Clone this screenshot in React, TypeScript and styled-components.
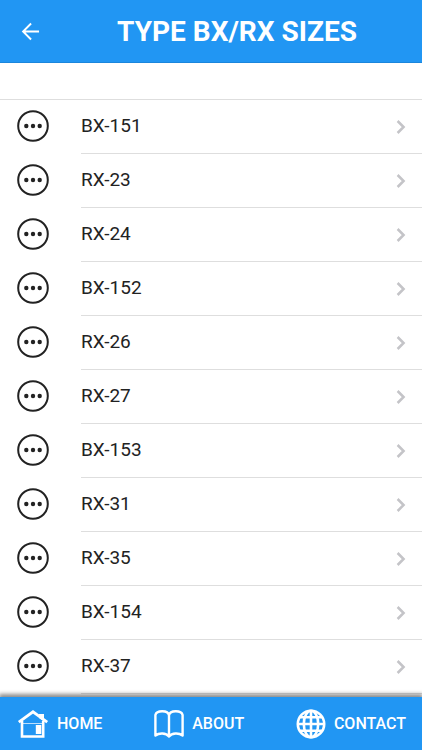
import React from 'react';
import styled, { createGlobalStyle } from 'styled-components';

const sizes = ['BX-151', 'RX-23', 'RX-24', 'BX-152', 'RX-26', 'RX-27', 'BX-153', 'RX-31', 'RX-35', 'BX-154', 'RX-37'];

const GlobalStyle = createGlobalStyle`
  *, *::before, *::after { box-sizing: border-box; }
  html, body, #root { height: 100%; }
  body { margin: 0; background: #fff; color: #222; font-family: Roboto, "Liberation Sans", sans-serif; }
`;

const Screen = styled.div`
  display: flex;
  flex-direction: column;
  height: 100%;
`;

const Header = styled.header`
  display: grid;
  grid-template-columns: 52px 1fr;
  align-items: center;
  flex: none;
  height: 63px;
  background: #2196f3;
  border-bottom: 1px solid #1b86dc;
  color: #fff;
`;

const BackButton = styled.button`
  display: flex;
  align-items: center;
  justify-content: flex-end;
  height: 48px;
  padding: 0 12px 0 0;
  border: 0;
  background: none;
  color: inherit;
  cursor: pointer;
`;

const Title = styled.h1`
  margin: 0;
  padding-top: 2px;
  text-align: center;
  font-size: 28px;
  line-height: 36px;
  font-weight: 700;
  white-space: nowrap;
`;

const Content = styled.main`
  flex: 1;
  min-height: 0;
  overflow: hidden;
`;

const List = styled.ul`
  margin: 36px 0 0;
  padding: 0;
  border-top: 1px solid #dedede;
  list-style: none;
`;

const Row = styled.a`
  display: flex;
  align-items: center;
  gap: 32px;
  height: 54px;
  padding-left: 17px;
  color: inherit;
  text-decoration: none;
`;

const Bullet = styled.svg`
  flex: none;
  margin-bottom: 2px;
`;

const RowBody = styled.span`
  display: flex;
  flex: 1;
  align-items: center;
  justify-content: space-between;
  height: 100%;
  padding-right: 16px;
  border-bottom: 1px solid #dedede;
`;

const RowLabel = styled.span`
  padding-bottom: 2px;
  font-size: 19px;
  line-height: 24px;
`;

const Footer = styled.nav`
  position: relative;
  display: flex;
  align-items: center;
  justify-content: space-between;
  flex: none;
  height: 53px;
  padding: 0 16px 0 17px;
  background: #2196f3;
  box-shadow: 0 -2px 4px 1px rgba(0, 0, 0, 0.45);
`;

const FooterLink = styled.a`
  display: flex;
  align-items: center;
  gap: 8px;
  color: #fff;
  font-size: 16px;
  line-height: 24px;
  font-weight: 500;
  text-decoration: none;
`;

const BackIcon = () => (
  <svg width="19" height="19" viewBox="0 0 20 20" fill="none" stroke="currentColor" strokeWidth="2" aria-hidden="true">
    <path d="M19 10H2.4M10.6 1.6 2.2 10l8.4 8.4" />
  </svg>
);

const MoreIcon = () => (
  <Bullet width="32" height="32" viewBox="0 0 32 32" aria-hidden="true">
    <circle cx="16" cy="16" r="14.8" fill="none" stroke="#222" strokeWidth="2" />
    <g fill="#222">
      <circle cx="9.3" cy="16" r="2.2" />
      <circle cx="16" cy="16" r="2.2" />
      <circle cx="22.7" cy="16" r="2.2" />
    </g>
  </Bullet>
);

const ChevronIcon = () => (
  <svg width="10" height="14" viewBox="0 0 10 14" fill="none" stroke="#c4c4c8" strokeWidth="2.5" aria-hidden="true">
    <path d="m1.6 1 6 6-6 6" />
  </svg>
);

const HomeIcon = () => (
  <svg width="32" height="28" viewBox="0 0 32 28" fill="none" stroke="currentColor" aria-hidden="true">
    <path d="M1.8 12.2 16 1.8l14.2 10.4" strokeWidth="2.8" />
    <path d="M5 11v15.5h21.2V11" strokeWidth="2.6" />
    <path d="M5 13.5h21.2" strokeWidth="0.7" />
    <path d="M22 4h5v7.5L22 8z" fill="currentColor" stroke="none" />
    <path d="M18.8 15h5.5v9h-5.5z" fill="currentColor" stroke="none" />
  </svg>
);

const BookIcon = () => (
  <svg width="30" height="28" viewBox="0 0 30 28" fill="none" stroke="currentColor" strokeWidth="2.4" strokeLinejoin="round" aria-hidden="true">
    <path d="M15 5.2C14 0 2.6 0 1.4 5v20.6c3.6-3 10.6-3 13.6.9 3-3.9 10-3.9 13.6-.9V5C27.4 0 16 0 15 5.2v21" />
  </svg>
);

const GlobeIcon = () => (
  <svg width="30" height="30" viewBox="0 0 30 30" fill="none" stroke="currentColor" strokeWidth="2.6" aria-hidden="true">
    <circle cx="15" cy="15" r="13.2" />
    <ellipse cx="15" cy="15" rx="7.2" ry="13.2" />
    <path d="M15 1.6v26.8M1.6 15h26.8M3.5 8.3h23M3.5 21.7h23" />
  </svg>
);

export default function App() {
  return (
    <Screen>
      <GlobalStyle />
      <Header>
        <BackButton type="button" aria-label="Back"><BackIcon /></BackButton>
        <Title>TYPE BX/RX SIZES</Title>
      </Header>
      <Content>
        <List>
          {sizes.map((size) => (
            <li key={size}>
              <Row href={`#${size}`}>
                <MoreIcon />
                <RowBody><RowLabel>{size}</RowLabel><ChevronIcon /></RowBody>
              </Row>
            </li>
          ))}
        </List>
      </Content>
      <Footer>
        <FooterLink href="#home"><HomeIcon />HOME</FooterLink>
        <FooterLink href="#about"><BookIcon />ABOUT</FooterLink>
        <FooterLink href="#contact"><GlobeIcon />CONTACT</FooterLink>
      </Footer>
    </Screen>
  );
}
